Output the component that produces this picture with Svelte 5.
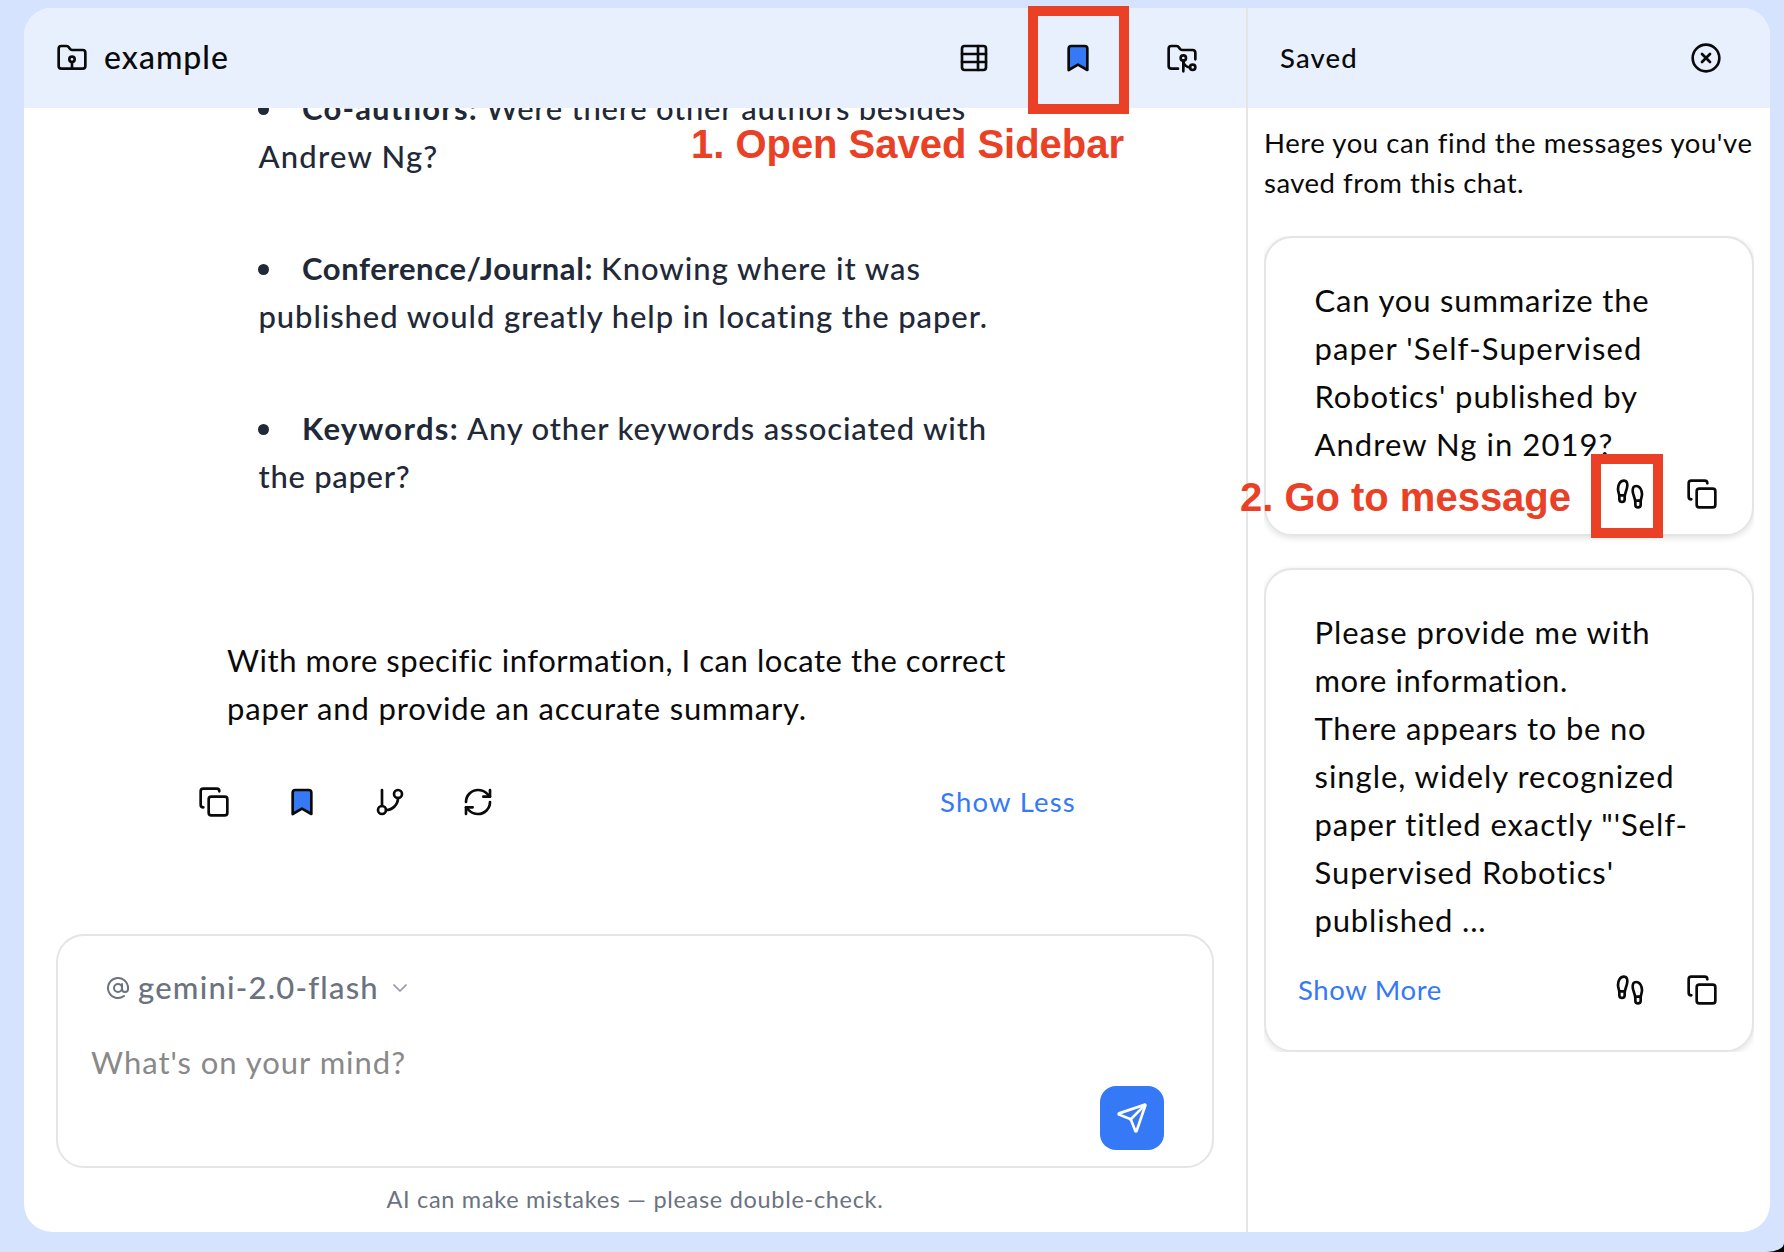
<script>
  const blue = '#3579f6';

  const icons = {
    folderRoot: {
      paths: [
        'M20 20a2 2 0 0 0 2-2V8a2 2 0 0 0-2-2h-7.9a2 2 0 0 1-1.69-.9L9.6 3.9A2 2 0 0 0 7.93 3H4a2 2 0 0 0-2 2v13a2 2 0 0 0 2 2Z',
        'M12 15v5'
      ],
      circles: [[12, 13, 2]]
    },
    table: {
      paths: [
        'M5 3h14a2 2 0 0 1 2 2v14a2 2 0 0 1-2 2H5a2 2 0 0 1-2-2V5a2 2 0 0 1 2-2Z',
        'M15 3v18',
        'M21 9H3',
        'M21 15H3'
      ]
    },
    bookmark: {
      fill: blue,
      paths: ['m19 21-7-4-7 4V5a2 2 0 0 1 2-2h10a2 2 0 0 1 2 2v16z']
    },
    folderGit: {
      paths: [
        'M9 20H4a2 2 0 0 1-2-2V5a2 2 0 0 1 2-2h3.9a2 2 0 0 1 1.69.9l.81 1.2a2 2 0 0 0 1.67.9H20a2 2 0 0 1 2 2v5',
        'M18 19c-2.8 0-5-2.2-5-5v8'
      ],
      circles: [[13, 12, 2], [20, 19, 2]]
    },
    close: { paths: ['m15 9-6 6', 'm9 9 6 6'], circles: [[12, 12, 10]] },
    copy: {
      paths: [
        'M10 8h10a2 2 0 0 1 2 2v10a2 2 0 0 1-2 2H10a2 2 0 0 1-2-2V10a2 2 0 0 1 2-2Z',
        'M4 16c-1.1 0-2-.9-2-2V4c0-1.1.9-2 2-2h10c1.1 0 2 .9 2 2'
      ]
    },
    branch: { paths: ['M6 3v12', 'M18 9a9 9 0 0 1-9 9'], circles: [[18, 6, 3], [6, 18, 3]] },
    refresh: {
      paths: [
        'M3 12a9 9 0 0 1 9-9 9.75 9.75 0 0 1 6.74 2.74L21 8',
        'M21 3v5h-5',
        'M21 12a9 9 0 0 1-9 9 9.75 9.75 0 0 1-6.74-2.74L3 16',
        'M8 16H3v5'
      ]
    },
    footprints: {
      paths: [
        'M4 16v-2.38C4 11.5 2.97 10.5 3 8c.03-2.72 1.49-6 4.5-6C9.37 2 10 3.8 10 5.5c0 3.11-2 5.66-2 8.68V16a2 2 0 1 1-4 0Z',
        'M20 20v-2.38c0-2.12 1.03-3.12 1-5.62-.03-2.72-1.49-6-4.5-6C14.63 6 14 7.8 14 9.5c0 3.11 2 5.66 2 8.68V20a2 2 0 1 0 4 0Z',
        'M16 17h4',
        'M4 13h4'
      ]
    },
    at: { paths: ['M16 8v5a3 3 0 0 0 6 0v-1a10 10 0 1 0-4 8'], circles: [[12, 12, 4]] },
    chevron: { paths: ['m6 9 6 6 6-6'] },
    send: {
      paths: [
        'M14.536 21.686a.5.5 0 0 0 .937-.024l6.5-19a.496.496 0 0 0-.635-.635l-19 6.5a.5.5 0 0 0-.024.937l7.93 3.18a2 2 0 0 1 1.112 1.11z',
        'm21.854 2.147-10.94 10.939'
      ]
    }
  };

  // Every line of text is a pair: the words and the measure they fill.
  const bullets = [
    { term: ['Co-authors:', 176], rest: ['Were there other authors besides', 480], next: ['Andrew Ng?', 180] },
    { term: ['Conference/Journal:', 291], rest: ['Knowing where it was', 320], next: ['published would greatly help in locating the paper.', 730] },
    { term: ['Keywords:', 157], rest: ['Any other keywords associated with', 520], next: ['the paper?', 152] }
  ];

  const closing = [
    ['With more specific information, I can locate the correct', 779],
    ['paper and provide an accurate summary.', 580]
  ];

  const intro = [
    ["Here you can find the messages you've", 488],
    ['saved from this chat.', 260]
  ];

  const saved = [
    {
      lines: [
        ['Can you summarize the', 335],
        ["paper 'Self-Supervised", 328],
        ["Robotics' published by", 324],
        ['Andrew Ng in 2019?', 299]
      ]
    },
    {
      more: true,
      lines: [
        ['Please provide me with', 336],
        ['more information.', 254],
        ['There appears to be no', 332],
        ['single, widely recognized', 360],
        ['paper titled exactly "\'Self-', 374],
        ["Supervised Robotics'", 300],
        ['published ...', 172]
      ]
    }
  ];

  // Spreads the letters of one line so that it fills the given measure.
  function fit(node, width) {
    node.style.letterSpacing = '0px';
    const natural = node.getBoundingClientRect().width;
    node.style.letterSpacing = `${(width - natural) / node.textContent.length}px`;
  }
</script>

{#snippet icon(name, kind = '')}
  <svg class="icon {kind}" viewBox="0 0 24 24" fill={icons[name].fill ?? 'none'}>
    {#each icons[name].paths as d}<path {d} />{/each}
    {#each icons[name].circles ?? [] as [cx, cy, r]}<circle {cx} {cy} {r} />{/each}
  </svg>
{/snippet}

{#snippet run([text, width])}<span class="run" use:fit={width}>{text}</span>{/snippet}

<div class="screen">
  <div class="panel">
    <main class="chat">
      <header class="bar chat-bar">
        {@render icon('folderRoot')}
        <h1 class="title">{@render run(['example', 125])}</h1>
        <nav class="tools">
          {@render icon('table')}
          <span class="marked">{@render icon('bookmark')}<span class="frame frame-saved"></span></span>
          {@render icon('folderGit')}
        </nav>
        <p class="note note-open">{@render run(['1. Open Saved Sidebar', 433])}</p>
      </header>

      <section class="thread">
        <ul class="bullets">
          {#each bullets as b}
            <li>
              <div class="line first">
                <i class="dot"></i>
                <strong>{@render run(b.term)}</strong>
                {@render run(b.rest)}
              </div>
              <div class="line">{@render run(b.next)}</div>
            </li>
          {/each}
        </ul>
        <div class="closing">
          {#each closing as l}<div class="line">{@render run(l)}</div>{/each}
        </div>
        <div class="actions">
          {@render icon('copy')}
          {@render icon('bookmark')}
          {@render icon('branch')}
          {@render icon('refresh')}
          <span class="link">{@render run(['Show Less', 136])}</span>
        </div>
      </section>

      <section class="composer">
        <div class="model">
          {@render icon('at', 'at')}
          <span class="model-name">{@render run(['gemini-2.0-flash', 241])}</span>
          {@render icon('chevron', 'chevron')}
        </div>
        <div class="placeholder">{@render run(["What's on your mind?", 315])}</div>
        <button class="send" aria-label="Send">{@render icon('send')}</button>
      </section>
      <footer class="disclaimer">{@render run(['AI can make mistakes — please double-check.', 497])}</footer>
    </main>

    <aside class="sidebar">
      <header class="bar side-bar">
        <h2 class="side-title">{@render run(['Saved', 78])}</h2>
        {@render icon('close')}
      </header>
      <div class="intro">
        {#each intro as l}<div class="intro-line">{@render run(l)}</div>{/each}
      </div>
      <div class="cards">
        {#each saved as s, i}
          <article class="card" class:long={s.more}>
            <div class="card-text">
              {#each s.lines as l}<div class="line">{@render run(l)}</div>{/each}
            </div>
            <div class="card-row">
              {#if s.more}<span class="link">{@render run(['Show More', 144])}</span>{/if}
              <span class="marked push">
                {@render icon('footprints')}
                {#if i === 0}<span class="frame frame-goto"></span>{/if}
              </span>
              {@render icon('copy')}
            </div>
          </article>
        {/each}
      </div>
      <p class="note note-goto">{@render run(['2. Go to message', 331])}</p>
    </aside>
  </div>
</div>

<style>
  :global(body) { margin: 0; background: #000; }
  .screen {
    box-sizing: border-box; width: 1784px; height: 1252px; padding: 8px 14px 20px 24px;
    background: #d6e3fe; border-bottom-right-radius: 17px 9px; overflow: hidden;
    font-family: Lato, 'Open Sans', sans-serif; font-size: 31px; line-height: 48px; color: #0a0a0a;
  }
  .panel { display: flex; height: 1224px; border-radius: 28px; background: #fff; }
  h1, h2, p, ul { margin: 0; padding: 0; font-weight: 500; }
  .run { display: inline-block; white-space: nowrap; }
  .line { display: flex; height: 48px; }

  .icon {
    display: block; flex: none; width: 32px; height: 32px; stroke: currentColor;
    stroke-width: 2; stroke-linecap: round; stroke-linejoin: round;
  }
  .marked { position: relative; display: block; }
  .frame { position: absolute; box-sizing: border-box; border: 10px solid #ea4025; z-index: 2; }
  .frame-saved { left: -34px; top: -36px; width: 101px; height: 108px; }
  .frame-goto { left: -23px; top: -24px; width: 72px; height: 84px; }
  .note {
    position: absolute; z-index: 3; color: #ea4025;
    font: bold 40px/48px 'Liberation Sans', Arial, sans-serif;
  }
  .note-open { left: 667px; top: 112px; }
  .note-goto { left: -8px; top: 465px; }

  .bar { display: flex; align-items: center; height: 100px; flex: none; background: #e8f0fe; box-sizing: border-box; }
  .chat { position: relative; display: flex; flex-direction: column; width: 1222px; }
  .chat-bar { padding: 0 48px 0 32px; border-top-left-radius: 28px; }
  .title { margin-left: 16px; font-size: 32px; padding-bottom: 2px; }
  .tools { display: flex; gap: 72px; margin-left: auto; }

  .thread { flex: 1; overflow: hidden; }
  .bullets { list-style: none; margin: -24px 0 136px; padding-left: 234.5px; color: #1f2937; display: grid; gap: 64px; }
  .first { gap: 8px; }
  .dot { flex: none; width: 11px; height: 11px; margin: 20px 25px 0 -0.5px; border-radius: 50%; background: #1f2937; }
  strong { font-weight: 700; }
  .closing { padding-left: 203px; }
  .actions { display: flex; align-items: center; gap: 56px; height: 32px; margin-top: 54px; padding: 0 170px 0 174px; }
  .link { color: #3579f6; font-size: 27.5px; line-height: 40px; padding-bottom: 1px; }
  .actions .link { margin-left: auto; }

  .composer {
    position: relative; box-sizing: border-box; height: 234px; margin: 0 32px;
    border: 2px solid #e5e5e5; border-radius: 28px;
  }
  .model { display: flex; align-items: center; height: 48px; margin: 28px 0 0 48px; color: #6b7280; }
  .model-name { margin-left: 8px; padding-bottom: 3px; font-weight: 500; }
  .at { width: 24px; height: 24px; }
  .chevron { width: 24px; height: 24px; margin-left: 9px; stroke-width: 1.7; color: #9297a6; }
  .placeholder { margin: 26px 0 0 33px; color: #898989; }
  .send {
    position: absolute; right: 48px; bottom: 16px; width: 64px; height: 64px; padding: 16px;
    border: 0; border-radius: 16px; background: #3579f6; color: #fff;
  }
  .disclaimer { height: 51px; padding-top: 13px; text-align: center; font-size: 23.5px; line-height: 36px; color: #6b7280; }

  .sidebar { position: relative; flex: 1; border-left: 2px solid #e5e5e5; }
  .side-bar { padding: 0 48px 0 32px; justify-content: space-between; border-top-right-radius: 28px; }
  .side-title { font-size: 27.5px; line-height: 40px; padding-bottom: 1px; }
  .intro { padding: 15px 0 33px 16px; font-size: 27.5px; line-height: 40px; }
  .intro-line { height: 40px; }
  .cards { display: grid; gap: 32px; margin: 0 16px; overflow: hidden; }
  .card {
    box-sizing: border-box; height: 300px; padding-top: 38px; border: 2px solid #e5e5e5;
    border-radius: 28px; box-shadow: 0 2px 6px rgba(0, 0, 0, 0.12);
  }
  .long { height: 484px; }
  .card-text { padding-left: 48.5px; }
  .card-row { display: flex; align-items: center; gap: 40px; height: 48px; padding: 0 34px 0 32px; margin-top: 2px; }
  .long .card-row { margin-top: 22px; }
  .push { margin-left: auto; }
</style>
